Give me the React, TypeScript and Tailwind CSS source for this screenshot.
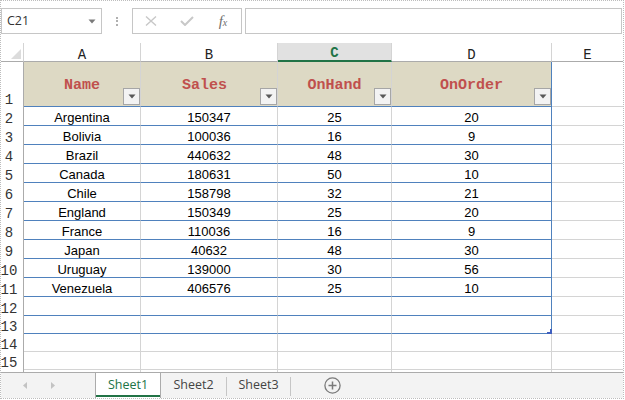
import React from 'react';

const data = [
  ['Argentina', '150347', '25', '20'],
  ['Bolivia', '100036', '16', '9'],
  ['Brazil', '440632', '48', '30'],
  ['Canada', '180631', '50', '10'],
  ['Chile', '158798', '32', '21'],
  ['England', '150349', '25', '20'],
  ['France', '110036', '16', '9'],
  ['Japan', '40632', '48', '30'],
  ['Uruguay', '139000', '30', '56'],
  ['Venezuela', '406576', '25', '10'],
];

const colW = ['w-[117px]', 'w-[137px]', 'w-[114px]', 'w-[160px]', 'w-[71px]'];
const letters = ['A', 'B', 'C', 'D', 'E'];
const headers = ['Name', 'Sales\u00a0', 'OnHand', 'OnOrder'];

function FilterButton() {
  return (
    <div className="absolute right-0 bottom-[1px] w-[17px] h-[17px] border border-[#a6a6a6] bg-[#f3f3f3] flex items-center justify-center">
      <svg width="8" height="5" viewBox="0 0 8 5">
        <polygon points="0.5,0.5 7.5,0.5 4,4.5" fill="#595959" />
      </svg>
    </div>
  );
}

function RowNum({ n, h }: { n: string; h: string }) {
  return (
    <div
      className={`${h} w-[23px] shrink-0 border-r border-[#ababab] flex items-end justify-center pr-[6px] pb-[1px] leading-[12px] text-[14px] text-[#333] font-['Liberation_Mono',monospace]`}
    >
      {n}
    </div>
  );
}

function DataRow({ n, cells, h, inTable }: { n: string; cells: string[]; h: string; inTable: boolean }) {
  return (
    <div className="flex">
      <RowNum n={n} h={h} />
      {colW.map((w, i) => {
        const table = inTable && i < 4;
        const bottom = table ? 'border-b border-b-[#4f81bd]' : 'border-b border-b-[#d4d4d4]';
        const right =
          i === 4 ? '' : inTable && i === 3 ? 'border-r border-r-[#4f81bd]' : 'border-r border-r-[#d4d4d4]';
        return (
          <div
            key={i}
            className={`${w} ${h} shrink-0 ${bottom} ${right} flex items-end justify-center pb-[1px] leading-[13px] text-[13px] text-black`}
          >
            {cells[i] ?? ''}
          </div>
        );
      })}
    </div>
  );
}

export default function App() {
  return (
    <div className="w-[624px] h-[399px] border border-dotted border-[#bdbdbd] bg-white overflow-hidden flex flex-col font-['Liberation_Sans',Arial,sans-serif]">
      {/* formula bar */}
      <div className="h-[42px] shrink-0 flex items-start pt-[7px]">
        <div className="w-[101px] h-[26px] border border-[#c6c6c6] flex items-center justify-between pl-[5px] pr-[5px] font-['Open_Sans',sans-serif] text-[12.5px] text-[#333]">
          <span>C21</span>
          <svg width="8" height="5" viewBox="0 0 8 5">
            <polygon points="0.5,0.5 7.5,0.5 4,4.5" fill="#7a7a7a" />
          </svg>
        </div>
        <div className="w-[30px] h-[26px] flex flex-col items-center justify-center gap-[1.5px]">
          <div className="w-[2px] h-[2px] bg-[#b0b0b0]" />
          <div className="w-[2px] h-[2px] bg-[#b0b0b0]" />
          <div className="w-[2px] h-[2px] bg-[#b0b0b0]" />
        </div>
        <div className="w-[110px] h-[26px] border border-[#c6c6c6] flex">
          <div className="w-[36px] flex items-center justify-center">
            <svg width="12" height="10" viewBox="0 0 12 10">
              <path d="M1 0.5 L11 9.5 M11 0.5 L1 9.5" stroke="#c8c8c8" strokeWidth="1.4" />
            </svg>
          </div>
          <div className="w-[36px] flex items-center justify-center">
            <svg width="14" height="10" viewBox="0 0 14 10">
              <path d="M1 5 L5 9 L13 1" stroke="#c8c8c8" strokeWidth="2" fill="none" />
            </svg>
          </div>
          <div className="w-[36px] flex items-center justify-center font-['Liberation_Serif',serif] italic text-[#6f6f6f] text-[15px] leading-none">
            <span>f</span>
            <span className="text-[10px] mt-[4px]">x</span>
          </div>
        </div>
        <div className="flex-1 ml-[3px] mr-[1px] h-[26px] border border-[#c6c6c6]" />
      </div>

      {/* column headers */}
      <div className="flex h-[19px] shrink-0">
        <div className="w-[23px] h-[19px] shrink-0 border-r border-r-[#d4d4d4] border-b border-b-[#ababab] flex items-end justify-end pr-[2px] pb-[2px]">
          <svg width="10" height="10" viewBox="0 0 10 10">
            <polygon points="10,0 10,10 0,10" fill="#dcdcdc" />
          </svg>
        </div>
        {colW.map((w, i) => (
          <div
            key={i}
            className={`${w} h-[19px] shrink-0 flex items-end justify-center leading-[12px] text-[14px] font-['Liberation_Mono',monospace] ${
              i === 2
                ? 'bg-[#e1e1e1] border-b-2 border-b-[#217346] text-[#217346] font-bold pb-[1px]'
                : 'border-b border-b-[#ababab] text-[#222]'
            } ${i === 4 ? '' : 'border-r border-r-[#d4d4d4]'}`}
          >
            {letters[i]}
          </div>
        ))}
      </div>

      {/* row 1: table header */}
      <div className="flex">
        <RowNum n="1" h="h-[45px]" />
        {colW.map((w, i) => (
          <div
            key={i}
            className={`${w} h-[45px] shrink-0 relative border-b ${
              i < 4 ? 'bg-[#ddd9c4] border-b-[#4f81bd]' : 'border-b-[#d4d4d4]'
            } ${i === 4 ? '' : i === 3 ? 'border-r border-r-[#4f81bd]' : 'border-r border-r-[#d4d4d4]'} flex items-center justify-center pt-[5px]`}
          >
            {i < 4 && (
              <>
                <span className="font-['Liberation_Mono',monospace] font-bold text-[15px] text-[#c0504d] whitespace-pre">
                  {headers[i]}
                </span>
                <FilterButton />
              </>
            )}
          </div>
        ))}
      </div>

      {/* data rows */}
      {data.map((r, k) => (
        <DataRow key={k} n={String(k + 2)} cells={r} h="h-[19px]" inTable />
      ))}
      <DataRow n="12" cells={[]} h="h-[19px]" inTable />
      <div className="relative">
        <DataRow n="13" cells={[]} h="h-[18px]" inTable />
        <svg className="absolute left-[546px] top-[13px]" width="5" height="5" viewBox="0 0 5 5">
          <polygon points="3,0 5,0 5,5 0,5 0,3 3,3" fill="#3f5fbf" />
        </svg>
      </div>
      <DataRow n="14" cells={[]} h="h-[18px]" inTable={false} />
      <DataRow n="15" cells={[]} h="h-[18px]" inTable={false} />
      <div className="flex h-[2px] overflow-hidden">
        <div className="w-[23px] border-r border-[#ababab] shrink-0" />
        {colW.map((w, i) => (
          <div key={i} className={`${w} shrink-0 ${i === 4 ? '' : 'border-r border-r-[#d4d4d4]'}`} />
        ))}
      </div>

      {/* sheet tabs */}
      <div className="h-[26px] shrink-0 border-t border-[#ababab] bg-[#f3f3f3] flex font-['Open_Sans',sans-serif] text-[12.5px]">
        <div className="w-[94px] shrink-0 flex items-center pl-[22px]">
          <svg width="4" height="7" viewBox="0 0 4 7">
            <polygon points="4,0 4,7 0,3.5" fill="#c3c3c3" />
          </svg>
          <svg className="ml-[24px]" width="4" height="7" viewBox="0 0 4 7">
            <polygon points="0,0 0,7 4,3.5" fill="#c3c3c3" />
          </svg>
        </div>
        <div className="w-[66px] shrink-0 relative bg-white border-x border-[#ababab] flex items-center justify-center text-[#217346]">
          Sheet1
          <div className="absolute left-0 right-0 bottom-[1px] h-[2px] bg-[#217346]" />
        </div>
        <div className="w-[65px] shrink-0 flex items-center justify-center text-[#444]">Sheet2</div>
        <div className="w-px h-[19px] mt-[4px] bg-[#c6c6c6]" />
        <div className="w-[63px] shrink-0 flex items-center justify-center text-[#444]">Sheet3</div>
        <div className="w-px h-[19px] mt-[4px] bg-[#c6c6c6]" />
        <div className="ml-[33px] flex items-center">
          <svg width="17" height="17" viewBox="0 0 17 17">
            <circle cx="8.5" cy="8.5" r="7.6" stroke="#7a7a7a" strokeWidth="1.3" fill="none" />
            <path d="M8.5 4.5 V12.5 M4.5 8.5 H12.5" stroke="#7a7a7a" strokeWidth="1.5" />
          </svg>
        </div>
      </div>
    </div>
  );
}
